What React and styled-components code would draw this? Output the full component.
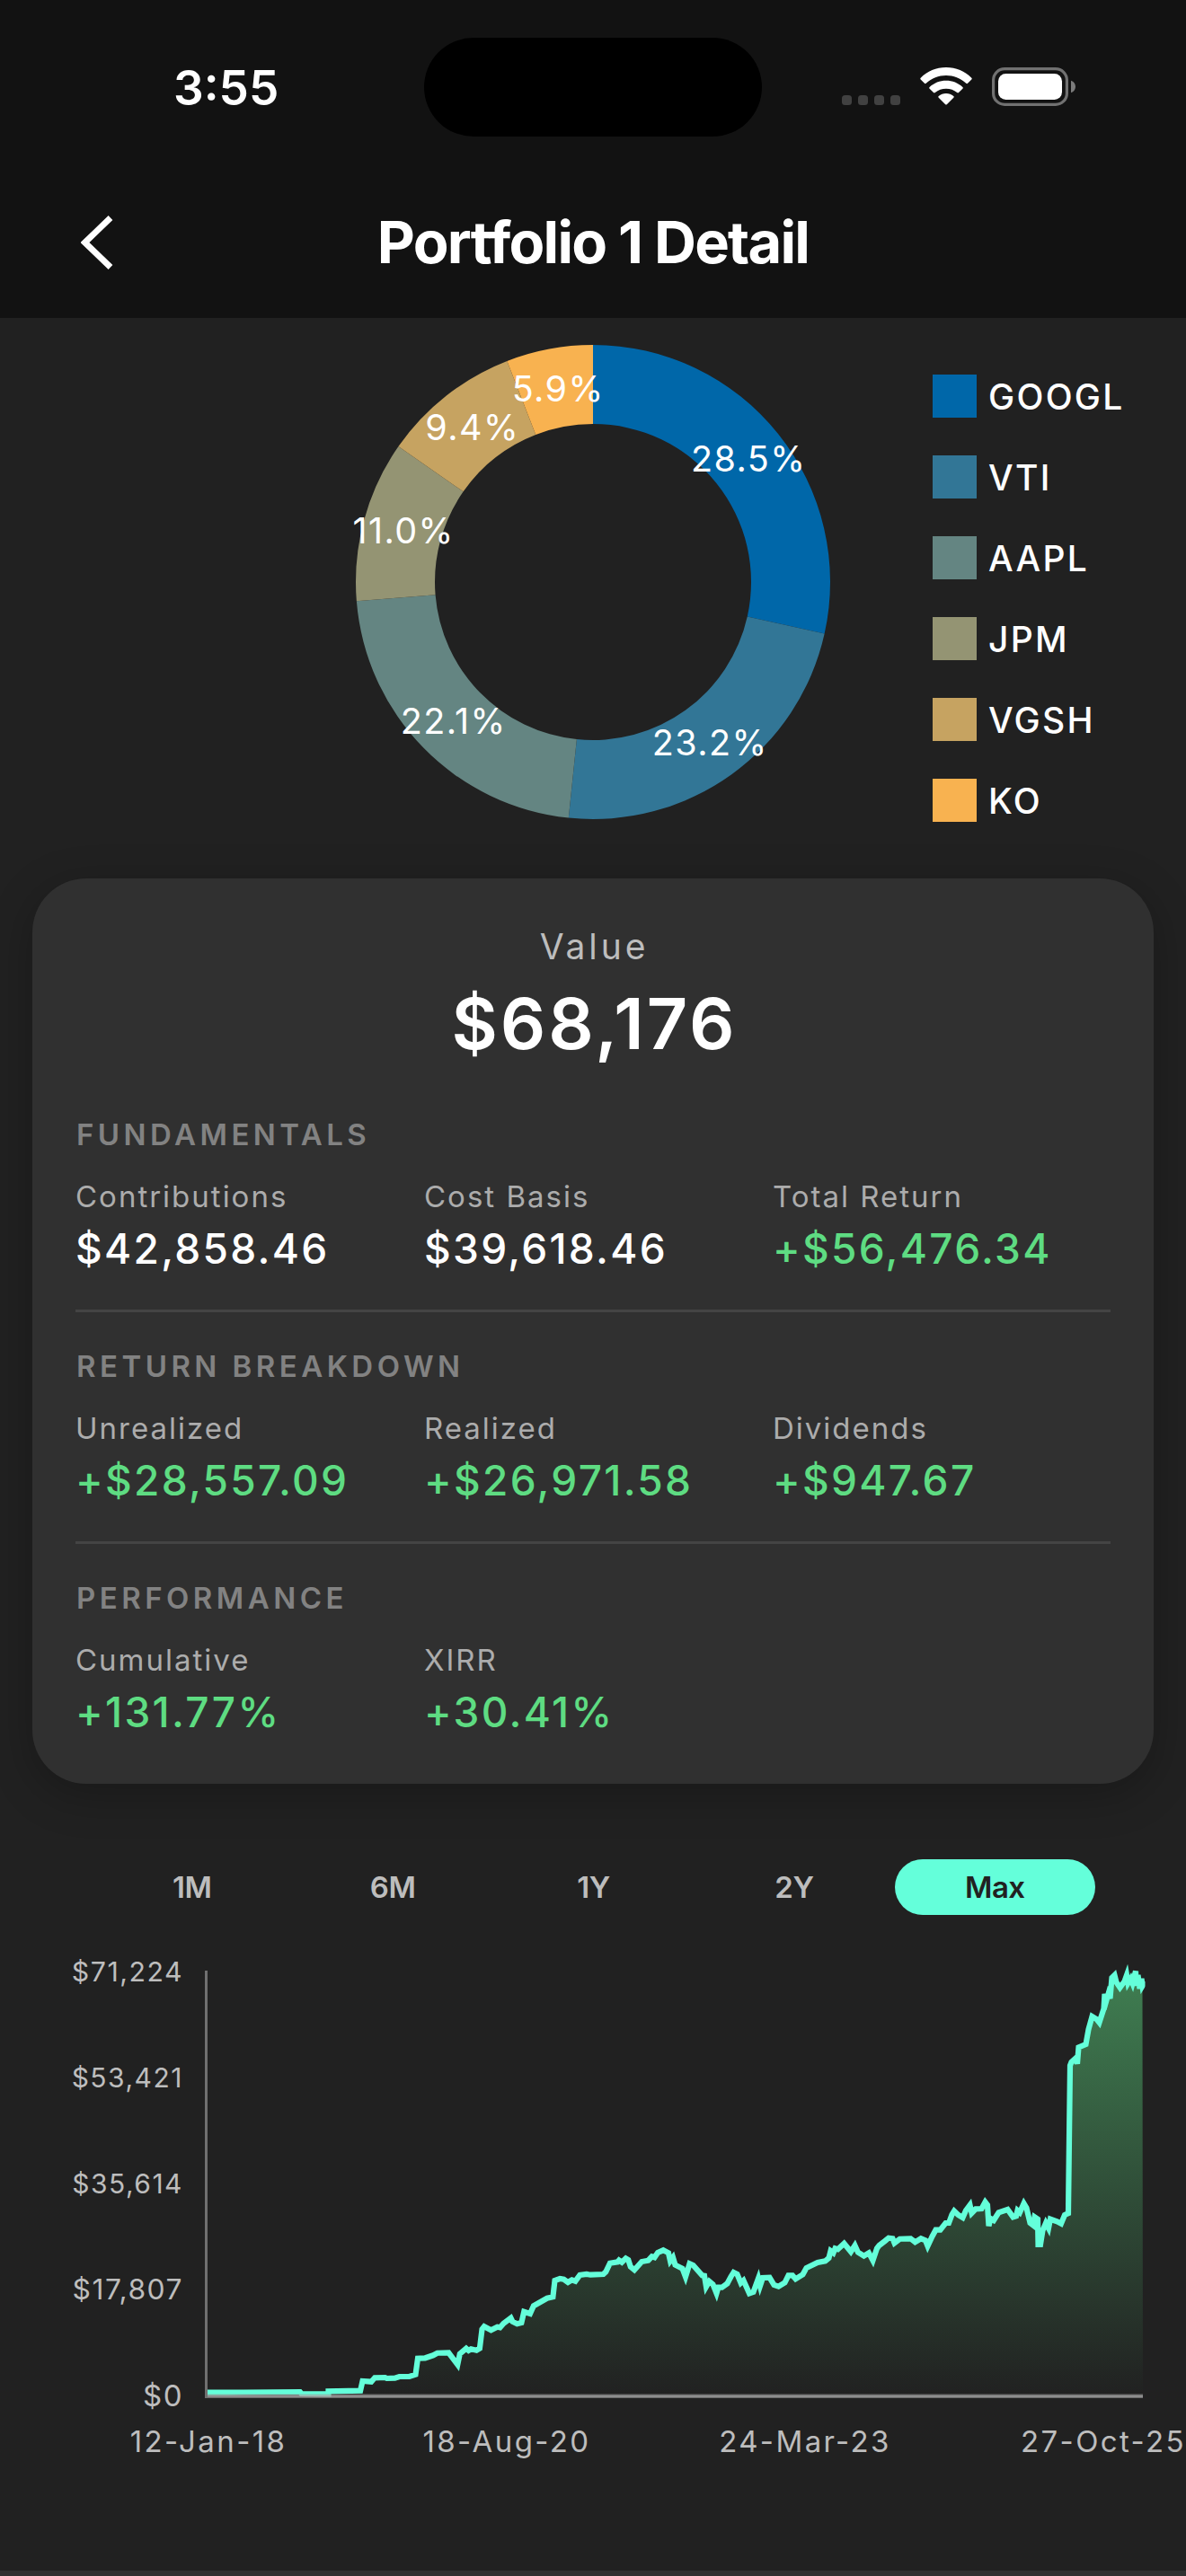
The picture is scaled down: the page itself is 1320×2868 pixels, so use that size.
import React, { useState } from 'react'
import styled, { createGlobalStyle } from 'styled-components'

const holdings = [
    { ticker: 'GOOGL', share: 28.5, label: '28.5%', color: '#0067a9', x: 831.5, y: 525 },
    { ticker: 'VTI', share: 23.14, label: '23.2%', color: '#327696', x: 788.5, y: 841 },
    { ticker: 'AAPL', share: 22.07, label: '22.1%', color: '#648582', x: 503, y: 817 },
    { ticker: 'JPM', share: 10.98, label: '11.0%', color: '#949473', x: 447.5, y: 605 },
    { ticker: 'VGSH', share: 9.41, label: '9.4%', color: '#c6a361', x: 524, y: 490 },
    { ticker: 'KO', share: 5.9, label: '5.9%', color: '#f8b250', x: 619.5, y: 447 },
]

const sections = [
    {
        title: 'FUNDAMENTALS',
        stats: [
            { name: 'Contributions', value: '$42,858.46' },
            { name: 'Cost Basis', value: '$39,618.46' },
            { name: 'Total Return', value: '+$56,476.34', gain: true },
        ],
    },
    {
        title: 'RETURN BREAKDOWN',
        stats: [
            { name: 'Unrealized', value: '+$28,557.09', gain: true },
            { name: 'Realized', value: '+$26,971.58', gain: true },
            { name: 'Dividends', value: '+$947.67', gain: true },
        ],
    },
    {
        title: 'PERFORMANCE',
        stats: [
            { name: 'Cumulative', value: '+131.77%', gain: true },
            { name: 'XIRR', value: '+30.41%', gain: true },
        ],
    },
]

const ranges = ['1M', '6M', '1Y', '2Y', 'Max']

const yTicks = [
    { text: '$71,224', size: 30.3 },
    { text: '$53,421', size: 30 },
    { text: '$35,614', size: 30 },
    { text: '$17,807', size: 31.8 },
    { text: '$0', size: 33 },
]
const xTicks = ['12-Jan-18', '18-Aug-20', '24-Mar-23', '27-Oct-25']

// x,y pairs inside the 1042 x 474 plot
const history = `1.5,469.7 42,469.5 104.4,469 106,471 136,471.3 136,468.3 171.6,467.7 174,457 183.7,457.7
187.6,453.3 199,453 201,454 210,453.7 215,452 226,452 233,449.7 235.5,431.7 243.7,431.3 252.6,428.3
257.3,425.7 269.8,425.3 279.8,438.7 282.3,426.7 289.4,420.7 292,423 294.8,421.3 300.9,422.7 304.4,420.7
307,399.3 309.4,396.3 317,400.3 324,396.7 327,397.3 331,392.7 339,386.7 340.9,390.7 346,393.3 350.9,392
353.7,379.7 360.5,382 364.4,373.3 379.4,364.7 385.9,363.3 388,345 393.7,343 398,343.7 402.6,347
407,344.3 410.9,345.7 415.9,339 423.4,338 427.6,338.7 442,338 444.8,335.3 449.4,325.7 458,324.3
459.5,322.5 462.6,324.7 467,320.3 469.8,322 472.3,329.7 476.6,333.3 484.8,324 492,322.7 496,318.3
499,319.3 502.6,314 508.7,311.3 514.5,314.3 516.5,323.3 519.5,319.3 522,327.7 530,331.7 533.5,341
538,326.3 542,328 552,339.3 554.5,339.7 556.5,352 560,346 564,349.3 568,359.3 570,352.7 574,352.7
580,348.3 584,340.7 587,336 591,338 595,347.7 598,345 604.5,359.3 609,357.7 614.5,342.7 616.5,351
619.5,342 627,341.7 632,350 637,351.7 644,347.3 648,339.3 652.5,339.3 656,343.3 664,338.3 668,331
680.5,325 689,323.3 693,320 695,312 698,314.3 700,309.3 703,310.3 710,303.7 717.5,313 722,306
725.5,313.7 732,317.7 737.5,314.3 742,322.7 746.5,309.3 749,306 755.5,301 759.5,297.7 764,298.3
766,303.3 772,298.7 784,298.3 789,302.3 795.5,298.3 800.5,300.3 803,306.7 808,296 812,288.7 817,288.7
823,281 826.5,281 830,271.7 832.5,267.7 837,272 842,275 845.5,267 850,261 852,270 856.5,265.3 863,265
867,257.7 869.5,261 871,284.3 873,276 876.5,278 882,269.3 892,266 898,274.3 901.5,273.3 903,267
905.5,269.3 910,259.3 913,264.3 917,281 920.5,283.7 922,274.3 925.5,276.7 926,305 928.5,305 931,289.3
934.5,281 937.5,286.7 939.5,276.7 947,279.3 951.5,281.7 955.5,272 959.5,270.2 961.5,105.7 963,101.9
968,97.3 969.5,103.8 971,85.4 979,82 982,65.5 986,51 991,54 994,57.8 999,42.5 1000,26 1002,33
1004,26 1006,31 1008,8 1011,5 1013,13 1017,18.8 1022,12 1024.5,5 1026,14 1029,9 1031,14 1034.5,0.5
1035,17 1037,5 1039,20 1041,9 1042,17 1045,12`

function slicePath(from, to, r, inner) {
    const point = (share, radius) => {
        const a = (share / 100) * Math.PI * 2
        return `${264 + radius * Math.sin(a)} ${264 - radius * Math.cos(a)}`
    }
    return `M${point(from, r)} A${r} ${r} 0 0 1 ${point(to, r)} L${point(to, inner)} A${inner} ${inner} 0 0 0 ${point(from, inner)}Z`
}

function StatusBar() {
    return (
        <StatusStyled>
            <Clock>3:55</Clock>
            <Island />
            <StatusIcons>
                <Signal>
                    <i />
                    <i />
                    <i />
                    <i />
                </Signal>
                <svg width="58" height="43" viewBox="0 0 58 43">
                    <path
                        fill="#fff"
                        d="M29 0C40 0 50 4.300 57.300 11.700Q58.200 12.600 57.300 13.500L53 17.800Q52.200 18.600 51.300 17.800C45 12 37.300 9 29 9S13 12 6.700 17.800Q5.800 18.600 5 17.800L.7 13.500Q-.2 12.600 .7 11.700C8 4.300 18 0 29 0Z M29 14.700C36 14.700 42.500 17.300 47.400 21.900Q48.300 22.800 47.400 23.700L43 28.100Q42.100 28.900 41.200 28.100C37.800 25.200 33.600 23.700 29 23.700S20.200 25.200 16.800 28.100Q15.900 28.900 15 28.100L10.600 23.700Q9.700 22.800 10.600 21.900C15.500 17.300 22 14.700 29 14.700Z M29 29C32.200 29 35 30 37.300 31.900Q38.200 32.800 37.300 33.700L29.800 41.200Q29 42 28.200 41.200L20.700 33.700Q19.800 32.800 20.700 31.900C23 30 25.800 29 29 29Z"
                    />
                </svg>
                <svg width="94" height="43" viewBox="0 0 94 43">
                    <rect x="1.600" y="1.600" width="81.800" height="39.800" rx="12.500" fill="none" stroke="#717171" strokeWidth="3.200" />
                    <rect x="7" y="7" width="71" height="29" rx="8.500" fill="#fff" />
                    <path d="M88 14.700C91 15.700 93 18.400 93 21.500S91 27.300 88 28.300Z" fill="#7b7b7b" />
                </svg>
            </StatusIcons>
        </StatusStyled>
    )
}

function Donut() {
    let start = 0
    return (
        <DonutSvg viewBox="0 0 528 528">
            {holdings.map((h) => {
                const from = start
                start += h.share
                return <path key={h.ticker} d={slicePath(from, start, 264, 176)} fill={h.color} />
            })}
            {holdings.map((h) => (
                <SliceLabel key={h.ticker} x={h.x - 394.3} y={h.y - 384}>
                    {h.label}
                </SliceLabel>
            ))}
        </DonutSvg>
    )
}

function HistoryChart() {
    return (
        <ChartSvg viewBox="0 0 1320 730">
            <defs>
                <linearGradient id="fade" gradientUnits="userSpaceOnUse" x1="0" y1="0" x2="0" y2="474">
                    <stop offset="0" stopColor="#5edc82" stopOpacity="0.5" />
                    <stop offset="1" stopColor="#5edc82" stopOpacity="0" />
                </linearGradient>
                <clipPath id="plot">
                    <rect x="1.500" y="-10" width="1043.500" height="500" />
                </clipPath>
            </defs>
            <g transform="translate(229.500 62)">
                <polygon points={`1.5,474 ${history.replace(' 1045,12', '')} 1042.5,474`} fill="url(#fade)" />
                <polyline
                    points={history}
                    fill="none"
                    stroke="#64ffda"
                    strokeWidth="6.200"
                    strokeMiterlimit="4"
                    clipPath="url(#plot)"
                />
                <rect x="-1.500" y="0" width="3" height="476" fill="#707070" />
                <rect x="1.500" y="471.500" width="1041" height="4.500" fill="#a0a0a0" fillOpacity="0.600" />
                <rect x="1.500" y="473" width="1041" height="1.700" fill="#b0b0b0" fillOpacity="0.600" />
            </g>
            {yTicks.map((t, i) => (
                <YTick key={t.text} x="204" y={62.5 + i * 118.1 + t.size * 0.3636} $size={t.size}>
                    {t.text}
                </YTick>
            ))}
            {xTicks.map((t, i) => (
                <XTick key={t} x={232 + i * 332} y="598">
                    {t}
                </XTick>
            ))}
        </ChartSvg>
    )
}

function App() {
    const [range, setRange] = useState('Max')

    return (
        <Screen>
            <GlobalStyle />
            <Header>
                <StatusBar />
                <NavBar>
                    <BackButton>
                        <svg width="36" height="60" viewBox="0 0 36 60">
                            <path d="M33 2.500L4.500 30L33 57.500" fill="none" stroke="#fff" strokeWidth="6.800" />
                        </svg>
                    </BackButton>
                    <Title>Portfolio 1 Detail</Title>
                </NavBar>
            </Header>
            <Allocation>
                <Donut />
                <Legend>
                    {holdings.map((h) => (
                        <LegendItem key={h.ticker}>
                            <Swatch $color={h.color} />
                            {h.ticker}
                        </LegendItem>
                    ))}
                </Legend>
            </Allocation>
            <Card>
                <ValueLabel>Value</ValueLabel>
                <ValueTotal>$68,176</ValueTotal>
                {sections.map((s) => (
                    <Section key={s.title}>
                        <SectionTitle>{s.title}</SectionTitle>
                        <Stats>
                            {s.stats.map((stat) => (
                                <div key={stat.name}>
                                    <StatName>{stat.name}</StatName>
                                    <StatValue $gain={stat.gain}>{stat.value}</StatValue>
                                </div>
                            ))}
                        </Stats>
                    </Section>
                ))}
            </Card>
            <Ranges>
                {ranges.map((r) => (
                    <RangeButton key={r} $active={r === range} onClick={() => setRange(r)}>
                        {r}
                    </RangeButton>
                ))}
            </Ranges>
            <HistoryChart />
            <BottomEdge />
        </Screen>
    )
}

const GlobalStyle = createGlobalStyle`
    *{
        box-sizing: border-box;
    }
    body{
        margin: 0;
        background-color: #212121;
        font-family: Inter, "Liberation Sans", sans-serif;
        color: white;
    }
`;

const Screen = styled.div`
    width: 1320px;
    height: 2868px;
    overflow: hidden;
    display: flex;
    flex-direction: column;
    background-color: #212121;
`;

const Header = styled.header`
    height: 354px;
    flex: none;
    background-color: #121212;
`;

const StatusStyled = styled.div`
    height: 192px;
    padding-top: 42px;
    display: grid;
    grid-template-columns: 472px 376px 1fr;
    align-items: start;
`;

const Clock = styled.div`
    padding-left: 193px;
    margin-top: 26px;
    font-size: 53px;
    line-height: 60px;
    font-weight: 600;
`;

const Island = styled.div`
    height: 110px;
    border-radius: 55px;
    background-color: black;
`;

const StatusIcons = styled.div`
    display: flex;
    padding: 33px 0 0 89px;
    svg{
        margin-right: 22px;
    }
`;

const Signal = styled.div`
    display: flex;
    gap: 7px;
    margin: 31px 22px 0 0;
    i{
        width: 11px;
        height: 11px;
        border-radius: 3.5px;
        background-color: #414141;
    }
`;

const NavBar = styled.div`
    display: grid;
    grid-template-columns: 220px 1fr 220px;
    align-items: center;
    height: 156px;
`;

const BackButton = styled.button`
    display: flex;
    padding: 0 0 0 90px;
    border: none;
    background: none;
`;

const Title = styled.h1`
    margin: 0;
    text-align: center;
    font-size: 65px;
    line-height: 80px;
    font-weight: 700;
    letter-spacing: -1.75px;
`;

const Allocation = styled.section`
    height: 624px;
    flex: none;
    display: grid;
    grid-template-columns: 396px 528px 1fr;
    padding-top: 30px;
`;

const DonutSvg = styled.svg`
    grid-column: 2;
    width: 528px;
    height: 528px;
    overflow: visible;
`;

const SliceLabel = styled.text`
    fill: white;
    font-size: 39.5px;
    font-weight: 400;
    letter-spacing: 1.4px;
    text-anchor: middle;
`;

const Legend = styled.ul`
    margin: 33px 0 0;
    padding: 0 0 0 114px;
    list-style: none;
    display: flex;
    flex-direction: column;
    gap: 42px;
`;

const LegendItem = styled.li`
    display: flex;
    gap: 13px;
    height: 48px;
    font-size: 39px;
    line-height: 50px;
    font-weight: 500;
    letter-spacing: 2.3px;
`;

const Swatch = styled.span`
    width: 49px;
    height: 48px;
    background-color: ${(props) => props.$color};
`;

const Card = styled.section`
    height: 1008px;
    flex: none;
    margin: 0 36px;
    padding: 52px 48px 0;
    border-radius: 60px;
    background-color: #303030;
    box-shadow: 0 12px 48px rgba(0, 0, 0, 0.25);
`;

const ValueLabel = styled.div`
    text-align: center;
    text-indent: 3px;
    font-size: 39px;
    line-height: 48px;
    letter-spacing: 3.9px;
    color: #bdbdbd;
`;

const ValueTotal = styled.div`
    margin: 13px 0 56px;
    text-align: center;
    text-indent: 3px;
    font-size: 79px;
    line-height: 96px;
    font-weight: 600;
    letter-spacing: 3px;
`;

const Section = styled.div`
    & + &{
        margin-top: 38px;
        padding-top: 40px;
        border-top: 3px solid #444;
    }
`;

const SectionTitle = styled.h2`
    margin: 0 0 29px;
    padding-left: 1px;
    font-size: 33px;
    line-height: 40px;
    font-weight: 600;
    letter-spacing: 4.45px;
    color: #828282;
`;

const Stats = styled.div`
    display: grid;
    grid-template-columns: repeat(3, 1fr);
    column-gap: 12px;
`;

const StatName = styled.div`
    font-size: 33px;
    line-height: 40px;
    letter-spacing: 2px;
    color: #acacac;
`;

const StatValue = styled.div`
    margin-top: 8px;
    font-size: 46px;
    line-height: 60px;
    font-weight: 500;
    letter-spacing: 2.3px;
    white-space: nowrap;
    color: ${(props) => (props.$gain ? '#5edc82' : 'white')};
`;

const Ranges = styled.div`
    flex: none;
    display: grid;
    grid-template-columns: repeat(5, 1fr);
    margin: 84px 101px 0 102px;
`;

const RangeButton = styled.button`
    height: 62px;
    padding: 0;
    border: none;
    border-radius: 31px;
    background-color: ${(props) => (props.$active ? '#64ffda' : 'transparent')};
    color: ${(props) => (props.$active ? '#212121' : '#bdbdbd')};
    font-family: inherit;
    font-size: 33px;
    line-height: 61px;
    font-weight: 600;
    letter-spacing: -0.5px;
`;

const ChartSvg = styled.svg`
    flex: none;
    width: 1320px;
    height: 730px;
`;

const YTick = styled.text`
    fill: #bdbdbd;
    font-size: ${(props) => props.$size}px;
    letter-spacing: 1.5px;
    text-anchor: end;
`;

const XTick = styled.text`
    fill: #bdbdbd;
    font-size: 33px;
    letter-spacing: 2.4px;
    text-anchor: middle;
`;

const BottomEdge = styled.div`
    height: 6px;
    background-color: #303030;
`;

export default App;
